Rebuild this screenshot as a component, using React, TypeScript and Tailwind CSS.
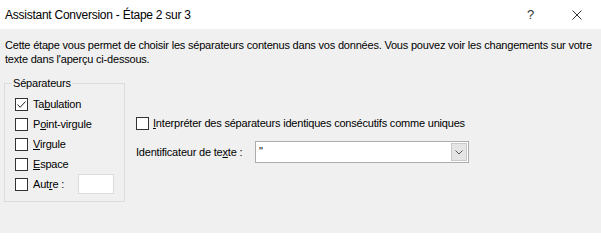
function Box({ checked = false }: { checked?: boolean }) {
  return (
    <span className="flex h-[13px] w-[13px] shrink-0 items-center justify-center border border-[#333333] bg-white">
      {checked && (
        <svg width="11" height="11" viewBox="0 0 11 11" fill="none">
          <path d="M1.5 5.5 L4.2 8.3 L9.5 2.5" stroke="#222" strokeWidth="1" />
        </svg>
      )}
    </span>
  )
}

function Option({ label, checked }: { label: React.ReactNode; checked?: boolean }) {
  return (
    <div className="flex h-[20px] items-center gap-[5px]">
      <Box checked={checked} />
      <span>{label}</span>
    </div>
  )
}

export default function App() {
  return (
    <div className="flex h-[233px] w-[601px] flex-col bg-[#f0f0f0] font-['Liberation_Sans',Arial,sans-serif] text-[11px] tracking-[-0.2px] text-[#000]">
      <div className="flex h-[29px] shrink-0 items-center bg-white pl-[5px] text-[12px] tracking-[-0.25px]">
        <span className="flex-1">Assistant Conversion - Étape 2 sur 3</span>
        <span className="mr-[38px] text-[13px] text-[#333]">?</span>
        <svg className="mr-[19px]" width="10" height="10" viewBox="0 0 10 10">
          <path d="M0.5 0.5 L9.5 9.5 M9.5 0.5 L0.5 9.5" stroke="#333" strokeWidth="1" />
        </svg>
      </div>

      <p className="whitespace-nowrap px-[5px] pt-[9px] leading-[14px]">
        Cette étape vous permet de choisir les séparateurs contenus dans vos données. Vous pouvez voir les changements sur votre
        <br />
        texte dans l'aperçu ci-dessous.
      </p>

      <div className="flex pl-[4px] pt-[10px]">
        <fieldset className="w-[121px] border border-[#dcdcdc] px-[10px] pb-[7px]">
          <legend className="-ml-[3px] px-[1px] leading-[14px]">Séparateurs</legend>
          <div className="mt-[4px] flex flex-col">
            <Option checked label={<>Ta<u>b</u>ulation</>} />
            <Option label={<>P<u>o</u>int-virgule</>} />
            <Option label={<><u>V</u>irgule</>} />
            <Option label={<><u>E</u>space</>} />
            <div className="flex h-[20px] items-center gap-[5px]">
              <Box />
              <span className="w-[40px]">Aut<u>r</u>e :</span>
              <span className="h-[20px] w-[36px] border border-[#dcdcdc] bg-white" />
            </div>
          </div>
        </fieldset>

        <div className="ml-[11px] flex flex-col pt-[37px]">
          <div className="flex h-[20px] items-center gap-[4px]">
            <Box />
            <span><u>I</u>nterpréter des séparateurs identiques consécutifs comme uniques</span>
          </div>
          <div className="mt-[8px] flex items-center">
            <span className="w-[119px]">Identificateur de te<u>x</u>te :</span>
            <div className="flex h-[22px] w-[214px] items-stretch border border-[#adadad] bg-white">
              <span className="flex-1 pl-[3px] leading-[18px]">"</span>
              <span className="m-[1px] flex w-[16px] items-center justify-center border border-[#c8c8c8] bg-[#e5e5e5]">
                <svg width="8" height="5" viewBox="0 0 8 5" fill="none">
                  <path d="M0.5 0.5 L4 4 L7.5 0.5" stroke="#555" strokeWidth="1" />
                </svg>
              </span>
            </div>
          </div>
        </div>
      </div>
    </div>
  )
}
